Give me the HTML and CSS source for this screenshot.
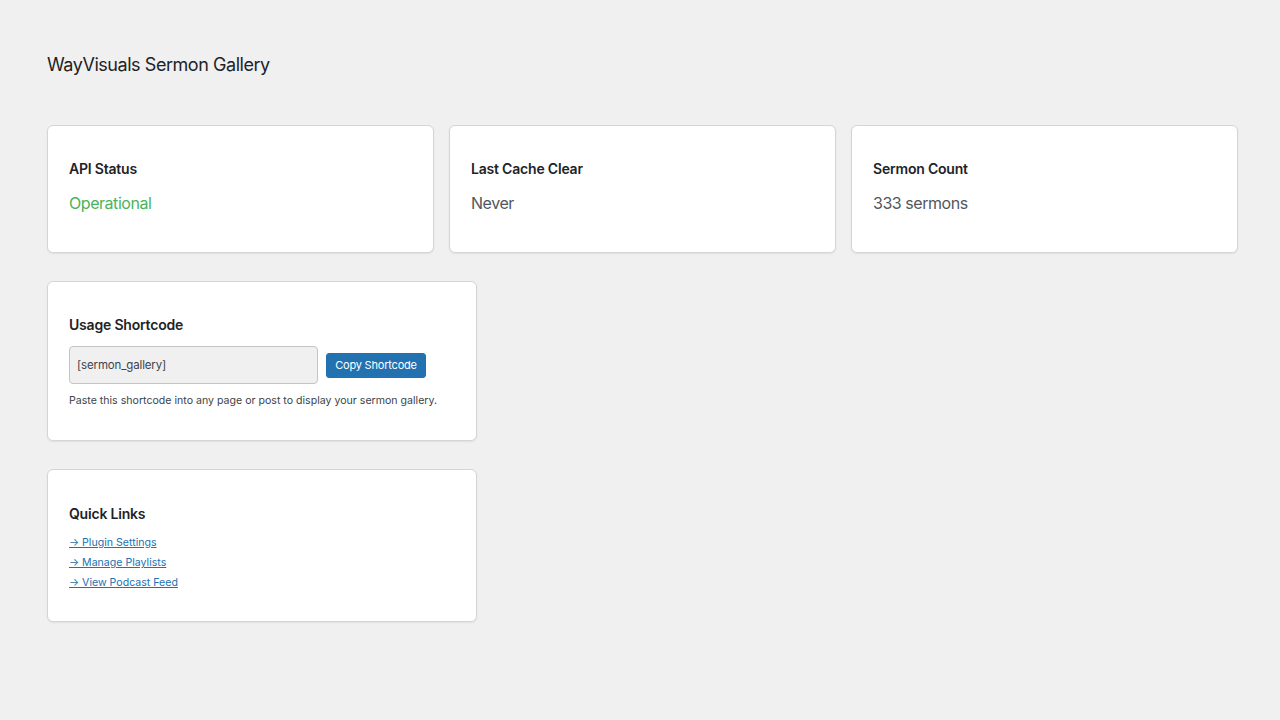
FILE: index.html
```html
<!DOCTYPE html>
<html lang="en">
<head>
<meta charset="utf-8">
<title>WayVisuals Sermon Gallery</title>
<link rel="stylesheet" href="styles.css">
</head>
<body>
<div class="wrap">
  <h1 class="page-title">WayVisuals Sermon Gallery</h1>

  <div class="stats">
    <div class="card">
      <h3 class="card-title">API Status</h3>
      <p class="stat-value ok">Operational</p>
    </div>
    <div class="card">
      <h3 class="card-title">Last Cache Clear</h3>
      <p class="stat-value">Never</p>
    </div>
    <div class="card">
      <h3 class="card-title">Sermon Count</h3>
      <p class="stat-value">333 sermons</p>
    </div>
  </div>

  <div class="card wide usage">
    <h3 class="card-title">Usage Shortcode</h3>
    <div class="shortcode-row">
      <input class="shortcode-input" type="text" value="[sermon_gallery]" readonly>
      <button class="btn-primary" type="button">Copy Shortcode</button>
    </div>
    <p class="desc">Paste this shortcode into any page or post to display your sermon gallery.</p>
  </div>

  <div class="card wide links">
    <h3 class="card-title">Quick Links</h3>
    <ul class="link-list">
      <li><a href="#">→ Plugin Settings</a></li>
      <li><a href="#">→ Manage Playlists</a></li>
      <li><a href="#">→ View Podcast Feed</a></li>
    </ul>
  </div>
</div>
</body>
</html>
```

FILE: styles.css
```css
* { box-sizing: border-box; }

html, body {
  margin: 0;
  padding: 0;
  background: #f0f0f1;
  font-family: Inter, "Noto Sans", "Liberation Sans", sans-serif;
  color: #1d2327;
}

.wrap {
  padding: 51px 42px 40px 47px;
}

.page-title {
  margin: 0 0 46px;
  font-size: 18px;
  line-height: 28px;
  font-weight: 400;
  color: #1d2327;
  letter-spacing: -0.45px;
}

.stats {
  display: grid;
  grid-template-columns: repeat(3, 1fr);
  gap: 15px;
  margin-bottom: 28px;
}

.card {
  background: #fff;
  border: 1px solid #d5d5d8;
  border-radius: 6px;
  box-shadow: 0 1px 2px rgba(0, 0, 0, 0.07);
  padding: 33px 21px 38px;
}

.card-title {
  margin: 0;
  font-size: 14px;
  line-height: 20px;
  font-weight: 600;
  color: #1d2327;
  letter-spacing: -0.2px;
}

.stat-value {
  margin: 13px 0 0;
  font-size: 16px;
  line-height: 22px;
  color: #50575e;
  letter-spacing: -0.45px;
}

.stat-value.ok {
  color: #4ab35a;
}

.wide {
  width: 430px;
}

.usage {
  padding-bottom: 31px;
  margin-bottom: 28px;
}

.shortcode-row {
  display: flex;
  align-items: center;
  gap: 8px;
  margin-top: 11px;
}

.shortcode-input {
  width: 249px;
  height: 38px;
  margin: 0;
  padding: 0 7px;
  background: #f0f0f1;
  border: 1px solid #c3c4c7;
  border-radius: 4px;
  font-family: inherit;
  font-size: 11.5px;
  letter-spacing: -0.15px;
  color: #3c434a;
}

.btn-primary {
  height: 25px;
  width: 100px;
  padding: 0;
  margin: 0;
  background: #2271b1;
  border: 1px solid #2271b1;
  border-radius: 3px;
  color: #fff;
  font-family: inherit;
  font-size: 11px;
  letter-spacing: -0.2px;
  line-height: 23px;
  white-space: nowrap;
  text-align: center;
  cursor: pointer;
}

.desc {
  margin: 9px 0 0;
  font-size: 10.6px;
  line-height: 16px;
  color: #3c434a;
}

.links {
  padding-top: 34px;
  padding-bottom: 28px;
}

.link-list {
  list-style: none;
  margin: 9px 0 0;
  padding: 0;
}

.link-list li {
  font-size: 10.6px;
  line-height: 20px;
}

.link-list a {
  color: #2271b1;
  text-decoration: underline;
}
```
